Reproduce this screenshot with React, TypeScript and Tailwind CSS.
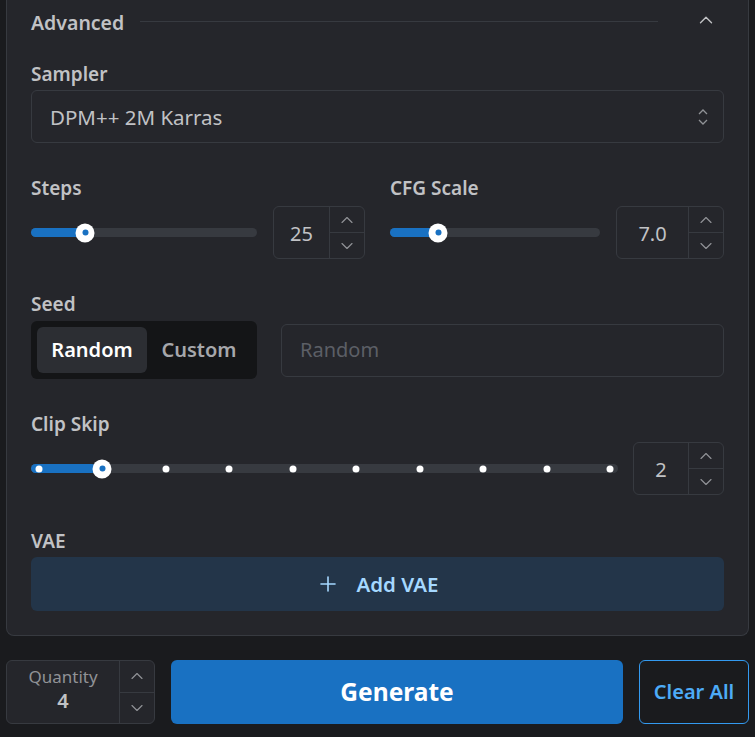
import { ChevronUp, ChevronDown, Plus } from "lucide-react";

function Label({ children }: { children: React.ReactNode }) {
  return <div className="text-[19px] font-semibold leading-6 text-[#c1c2c5]">{children}</div>;
}

function Stepper() {
  return (
    <div className="flex w-[35px] flex-col border-l border-[#373a40]">
      <div className="flex flex-1 items-center justify-center border-b border-[#373a40] text-[#909296]">
        <ChevronUp size={20} strokeWidth={1.4} />
      </div>
      <div className="flex flex-1 items-center justify-center text-[#909296]">
        <ChevronDown size={20} strokeWidth={1.4} />
      </div>
    </div>
  );
}

function NumberBox({ value, width }: { value: string; width: string }) {
  return (
    <div className={`flex h-[53px] shrink-0 rounded-md border border-[#373a40] ${width}`}>
      <div className="flex flex-1 items-center justify-center pt-[2px] text-[20px] text-[#c1c2c5]">{value}</div>
      <Stepper />
    </div>
  );
}

function Thumb() {
  return (
    <div className="absolute top-1/2 flex h-[19px] w-[19px] -translate-x-1/2 -translate-y-1/2 items-center justify-center rounded-full bg-white">
      <div className="h-[6px] w-[6px] rounded-full bg-[#1971c2]" />
    </div>
  );
}

function Slider({ pct, marks }: { pct: number; marks?: number }) {
  return (
    <div className="relative h-[9px] flex-1 rounded-full bg-[#373a40]">
      <div className="absolute inset-y-0 left-0 rounded-full bg-[#1971c2]" style={{ width: `${pct}%` }} />
      {marks &&
        Array.from({ length: marks }).map((_, i) => (
          <div
            key={i}
            className="absolute top-1/2 h-[7px] w-[7px] -translate-x-1/2 -translate-y-1/2 rounded-full bg-white"
            style={{ left: `calc(8px + (100% - 16px) * ${i / (marks - 1)})` }}
          />
        ))}
      <div className="absolute inset-y-0" style={{ left: marks ? `calc(8px + (100% - 16px) * ${pct / 100})` : `${pct}%` }}>
        <Thumb />
      </div>
    </div>
  );
}

export default function App() {
  return (
    <div
      className="min-h-[737px] bg-[#1a1b1e] px-[6px]"
      style={{ fontFamily: '"Noto Sans", "Open Sans", sans-serif' }}
    >
      <div className="rounded-b-lg border-x border-b border-[#373a40] bg-[#25262b] px-6 pb-6">
        <div className="flex h-[44px] items-center pt-[2px]">
          <span className="text-[19.5px] font-semibold text-[#c1c2c5]">Advanced</span>
          <div className="mx-4 mb-[4px] h-px flex-1 self-center bg-[#373a40]" />
          <div className="flex w-[50px] justify-end pr-[7px] pb-[6px] text-[#c1c2c5]">
            <ChevronUp size={22} strokeWidth={1.5} />
          </div>
        </div>

        <div className="mt-[18px]">
          <Label>Sampler</Label>
          <div className="mt-1 flex h-[53px] items-center justify-between rounded-md border border-[#373a40] pl-[18px] pr-[12px]">
            <span className="pt-[2px] text-[20.5px] text-[#c1c2c5]">DPM++ 2M Karras</span>
            <svg width="16" height="22" viewBox="0 0 16 22" fill="none" stroke="#909296" strokeWidth="1.3">
              <path d="M4 8 L8 4 L12 8" />
              <path d="M4 14 L8 18 L12 14" />
            </svg>
          </div>
        </div>

        <div className="mt-[33px] grid grid-cols-2 gap-x-[25px]">
          <div>
            <Label>Steps</Label>
            <div className="mt-[6px] flex items-center gap-4">
              <Slider pct={24} />
              <NumberBox value="25" width="w-[92px]" />
            </div>
          </div>
          <div>
            <Label>CFG Scale</Label>
            <div className="mt-[6px] flex items-center gap-4">
              <Slider pct={23} />
              <NumberBox value="7.0" width="w-[108px]" />
            </div>
          </div>
        </div>

        <div className="mt-[33px]">
          <Label>Seed</Label>
          <div className="mt-[5px] flex items-center gap-6">
            <div className="flex h-[58px] w-[226px] gap-0 rounded-md bg-[#141517] p-[6px]">
              <div className="flex w-[110px] items-center justify-center rounded-md bg-[#2c2e33] text-[20px] font-semibold text-white">
                Random
              </div>
              <div className="flex flex-1 items-center justify-center text-[20px] font-semibold text-[#a6a7ab]">
                Custom
              </div>
            </div>
            <div className="flex h-[53px] flex-1 items-center rounded-md border border-[#373a40] px-[18px] text-[20px] text-[#5c5f66]">
              Random
            </div>
          </div>
        </div>

        <div className="mt-[33px]">
          <Label>Clip Skip</Label>
          <div className="mt-[6px] flex items-center gap-[15px]">
            <Slider pct={11.1} marks={10} />
            <NumberBox value="2" width="w-[91px]" />
          </div>
        </div>

        <div className="mt-[34px]">
          <Label>VAE</Label>
          <div className="mt-1 flex h-[54px] items-center justify-center gap-[16px] rounded-md bg-[#233549] text-[20.5px] font-semibold text-[#a5d8ff]">
            <Plus size={24} strokeWidth={1.6} />
            <span>Add VAE</span>
          </div>
        </div>
      </div>

      <div className="mt-[24px] flex h-[64px] gap-4">
        <div className="flex w-[149px] rounded-md border border-[#373a40] bg-[#25262b]">
          <div className="flex flex-1 flex-col items-center justify-center pb-[4px]">
            <span className="text-[17px] leading-[22px] text-[#909296]">Quantity</span>
            <span className="text-[20px] font-semibold leading-[26px] text-[#c1c2c5]">4</span>
          </div>
          <Stepper />
        </div>
        <div className="flex flex-1 items-center justify-center rounded-md bg-[#1971c2] text-[24.5px] font-bold text-white">
          Generate
        </div>
        <div className="flex w-[110px] items-center justify-center rounded-md border border-[#339af0] text-[20px] font-semibold text-[#4dabf7]">
          Clear All
        </div>
      </div>
    </div>
  );
}
